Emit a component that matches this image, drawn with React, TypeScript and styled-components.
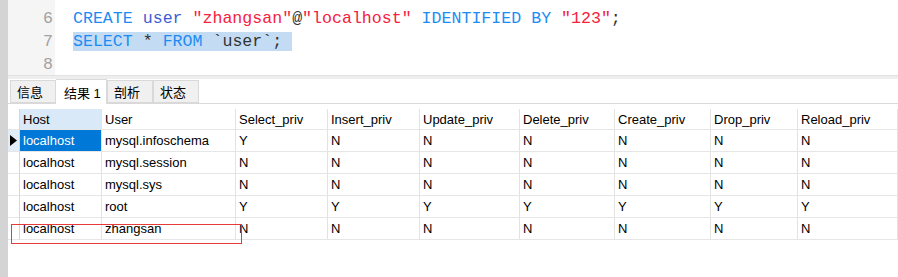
import React from 'react'
import styled, { createGlobalStyle } from 'styled-components'

const GlobalStyle = createGlobalStyle`
  html, body {
    margin: 0;
    padding: 0;
    background: #ffffff;
  }
  body {
    width: 898px;
    height: 277px;
    overflow: hidden;
  }
`

const Page = styled.div`
  display: flex;
  width: 898px;
  height: 277px;
  background: #ffffff;
`

const SideStrip = styled.div`
  width: 8px;
  flex: 0 0 8px;
  background: #d4d4d4;
`

const Main = styled.div`
  flex: 1;
  display: flex;
  flex-direction: column;
  min-width: 0;
`

const Editor = styled.div`
  display: flex;
  height: 75px;
  overflow: hidden;
  background: #ffffff;
`

const Gutter = styled.div`
  width: 45px;
  padding-right: 2px;
  background: #f5f5f5;
  text-align: right;
  color: #a2a2a2;
  font-family: 'Liberation Mono', 'DejaVu Sans Mono', monospace;
  font-size: 16.6px;
  line-height: 23px;
`

const Code = styled.div`
  flex: 1;
  padding-left: 18px;
  font-family: 'Liberation Mono', 'DejaVu Sans Mono', monospace;
  font-size: 16.6px;
  line-height: 23px;
  color: #333333;
  white-space: pre;
`

const Lines = styled.div`
  margin-top: -16px;
`

const Line = styled.div`
  height: 23px;
`

const Tok = styled.span<{ kind?: 'kw' | 'id' | 'str' | 'plain' }>`
  color: ${p =>
    p.kind === 'kw' ? '#1d8cf2' : p.kind === 'id' ? '#3b5fd2' : p.kind === 'str' ? '#f5213f' : '#333333'};
`

const Selected = styled.span`
  background: #c3dcf4;
`

const Splitter = styled.div`
  height: 3px;
  background: #eeeeee;
  border-top: 1px solid #e2e2e2;
`

const TabBar = styled.div`
  display: flex;
  align-items: flex-end;
  height: 24px;
  padding-left: 2px;
  border-bottom: 1px solid #d9d9d9;
  background: #ffffff;
`

const Tab = styled.div<{ active?: boolean; w: number }>`
  box-sizing: border-box;
  width: ${p => p.w}px;
  height: ${p => (p.active ? 25 : 23)}px;
  margin-bottom: ${p => (p.active ? -1 : 0)}px;
  padding-left: ${p => (p.active ? 8 : 6)}px;
  display: flex;
  align-items: center;
  background: ${p => (p.active ? '#ffffff' : '#f0f0f0')};
  border: 1px solid #d9d9d9;
  border-bottom: ${p => (p.active ? 'none' : '1px solid #d9d9d9')};
  border-left: ${p => (p.active ? 'none' : '1px solid #d9d9d9')};
  font-family: 'Liberation Sans', 'Noto Sans CJK SC', sans-serif;
  font-size: 13px;
  color: #000000;
  &:first-child {
    border-left: 1px solid #d9d9d9;
  }
`

const GridWrap = styled.div`
  position: relative;
  margin-top: 5px;
`

const Grid = styled.div`
  display: grid;
  grid-template-columns: 12px 82px 134px 92px 92px 100px 95px 96px 87px 100px;
  grid-auto-rows: 22px;
  grid-template-rows: 21px;
  font-family: 'Liberation Sans', 'Noto Sans CJK SC', sans-serif;
  font-size: 13px;
  color: #000000;
`

const Cell = styled.div<{ head?: boolean; hl?: boolean; sel?: boolean }>`
  box-sizing: border-box;
  display: flex;
  align-items: center;
  padding-left: 3px;
  white-space: nowrap;
  overflow: hidden;
  border-right: 1px solid #e3e3e3;
  border-bottom: 1px solid #e6e6e6;
  background: ${p => (p.sel ? '#0078d7' : p.hl ? '#d9e9f7' : '#ffffff')};
  color: ${p => (p.sel ? '#ffffff' : '#000000')};
`

const Indicator = styled.div<{ current?: boolean }>`
  box-sizing: border-box;
  display: flex;
  align-items: center;
  justify-content: center;
  border-right: 1px solid #d6d6d6;
  border-bottom: 1px solid #e6e6e6;
  background: ${p => (p.current ? '#e3edf8' : '#ffffff')};
`

const Annotation = styled.div`
  position: absolute;
  left: 3px;
  top: 115px;
  width: 231px;
  height: 20px;
  box-sizing: border-box;
  border: 1px solid #e63b3b;
  pointer-events: none;
`

const columns = [
  'Host',
  'User',
  'Select_priv',
  'Insert_priv',
  'Update_priv',
  'Delete_priv',
  'Create_priv',
  'Drop_priv',
  'Reload_priv',
]

const rows = [
  ['localhost', 'mysql.infoschema', 'Y', 'N', 'N', 'N', 'N', 'N', 'N'],
  ['localhost', 'mysql.session', 'N', 'N', 'N', 'N', 'N', 'N', 'N'],
  ['localhost', 'mysql.sys', 'N', 'N', 'N', 'N', 'N', 'N', 'N'],
  ['localhost', 'root', 'Y', 'Y', 'Y', 'Y', 'Y', 'Y', 'Y'],
  ['localhost', 'zhangsan', 'N', 'N', 'N', 'N', 'N', 'N', 'N'],
]

const tabs = [
  { label: '信息', w: 46 },
  { label: '结果 1', w: 51, active: true },
  { label: '剖析', w: 46 },
  { label: '状态', w: 46 },
]

const Arrow = () => (
  <svg width="7" height="11" viewBox="0 0 7 11">
    <polygon points="0,0 7,5.5 0,11" fill="#000000" />
  </svg>
)

const App: React.FC = () => {
  return (
    <>
      <GlobalStyle />
      <Page>
        <SideStrip />
        <Main>
          <Editor>
            <Gutter>
              <Lines>
                <Line>5</Line>
                <Line>6</Line>
                <Line>7</Line>
                <Line>8</Line>
              </Lines>
            </Gutter>
            <Code>
              <Lines>
                <Line />
                <Line>
                  <Tok kind="kw">CREATE</Tok> <Tok kind="id">user</Tok> <Tok kind="str">"zhangsan"</Tok>
                  <Tok>@</Tok>
                  <Tok kind="str">"localhost"</Tok> <Tok kind="kw">IDENTIFIED</Tok> <Tok kind="kw">BY</Tok>{' '}
                  <Tok kind="str">"123"</Tok>
                  <Tok>;</Tok>
                </Line>
                <Line>
                  <Selected>
                    <Tok kind="kw">SELECT</Tok> <Tok>*</Tok> <Tok kind="kw">FROM</Tok> <Tok>`user`;</Tok>{' '}
                  </Selected>
                </Line>
                <Line />
              </Lines>
            </Code>
          </Editor>
          <Splitter />
          <TabBar>
            {tabs.map(t => (
              <Tab key={t.label} w={t.w} active={t.active}>
                {t.label}
              </Tab>
            ))}
          </TabBar>
          <GridWrap>
            <Grid>
              <Indicator />
              {columns.map((c, i) => (
                <Cell key={c} head hl={i === 0}>
                  {c}
                </Cell>
              ))}
              {rows.map((r, ri) => (
                <React.Fragment key={ri}>
                  <Indicator current={ri === 0}>{ri === 0 && <Arrow />}</Indicator>
                  {r.map((v, ci) => (
                    <Cell key={ci} sel={ri === 0 && ci === 0}>
                      {v}
                    </Cell>
                  ))}
                </React.Fragment>
              ))}
            </Grid>
            <Annotation />
          </GridWrap>
        </Main>
      </Page>
    </>
  )
}

export default App
